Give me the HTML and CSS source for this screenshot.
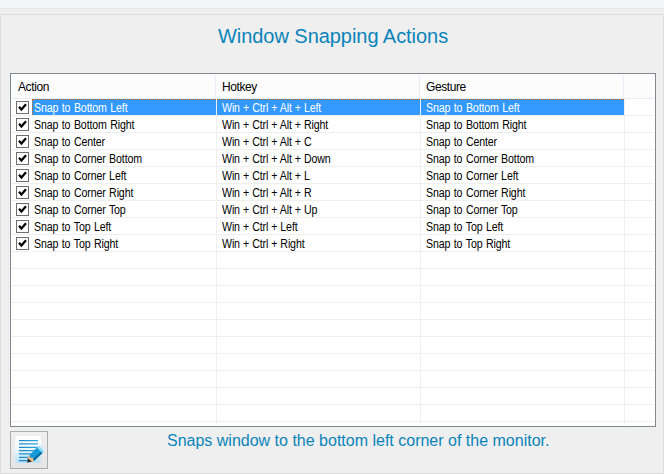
FILE: index.html
```html
<!DOCTYPE html>
<html lang="en">
<head>
<meta charset="utf-8">
<title>Window Snapping Actions</title>
<link rel="stylesheet" href="styles.css">
</head>
<body>
<div class="strip"></div>
<main class="group">
<h1 class="title">Window Snapping Actions</h1>
<section class="list">
<div class="head"><span>Action</span><span>Hotkey</span><span>Gesture</span><span></span></div>
<div class="rows" id="rows"></div>
</section>
<footer class="footer">
<button class="edit" aria-label="Edit action">
<svg width="36" height="36" viewBox="0 0 36 36">
<defs>
<linearGradient id="paper" x1="0" y1="0" x2="0" y2="1"><stop offset="0" stop-color="#fff"/><stop offset=".4" stop-color="#f4fbff"/><stop offset="1" stop-color="#b3dffa"/></linearGradient>
<linearGradient id="ink" x1="0" y1="0" x2="1" y2="0"><stop offset="0" stop-color="#1f86c4"/><stop offset="1" stop-color="#32a9df"/></linearGradient>
</defs>
<rect x="4" y="4" width="26" height="27" rx="4" fill="url(#paper)"/>
<path d="M8 8h19v1.300H8zM8 11.200h19v1.300H8zM8 14.800h19v1.300H8zM8 18h19v1.300H8zM8 21.200h16v1.300H8zM8 24.800h12v1.300H8zM8 28h9v1.300H8z" fill="url(#ink)"/>
<path d="M16 30.500l1.600-7 3.400-.5 3 4.500-1.500 2z" fill="#eebc82"/>
<path d="M16 30.500l1-4.200 3.800 3.400z" fill="#292b34"/>
<path d="M18.500 23l7.500-7.500 5.500 5.500-8.500 8-1-3-3-.5z" fill="#159bd7"/>
<path d="M22.300 26.500l8-7 1.200 1.500-8.500 8z" fill="#086ca7"/>
<path d="M26 15.500l2-1.500 5 5-1.500 2z" fill="#8ad8f5"/>
<path d="M28 14l1.500-.5 3.500 3.500v2z" fill="#c8effb"/>
</svg>
</button>
<p class="hint">Snaps window to the bottom left corner of the monitor.</p>
</footer>
</main>
<script src="script.js"></script>
</body>
</html>
```
FILE: styles.css
```css
* { box-sizing: border-box; }
body {
  margin: 0;
  height: 474px;
  overflow: hidden;
  background: #efefef;
  font-family: "Liberation Sans", Arial, sans-serif;
  display: flex;
  flex-direction: column;
}
.strip { height: 9px; margin-bottom: 5px; flex: none; background: #f4f5f8; border-bottom: 1px solid #e4e7ea; }
.group { height: 460px; border: 1px solid #dcdcdc; padding: 0 7px 0 9px; }
.title {
  margin: 0;
  height: 58px;
  padding: 9px 0 0 208px;
  font-size: 20px;
  line-height: 24px;
  font-weight: 400;
  letter-spacing: -0.05px;
  color: #0a84b9;
  white-space: nowrap;
}
.list { height: 354px; border: 1px solid #828790; background: #fff; padding: 1px; }
.head, .row { display: grid; }
.head {
  grid-template-columns: 204px 204px 204px 1fr;
  height: 24px;
  background: #fcfcfc;
  border-bottom: 1px solid #e5eef7;
  font-size: 12px;
  line-height: 24px;
  letter-spacing: -0.4px;
}
.head span { padding-left: 6px; border-right: 1px solid #e5eef7; }
.head span:last-child { border: 0; }
.rows { height: 326px; overflow: hidden; }
.row {
  grid-template-columns: 205px 204px 204px 1fr;
  height: 17px;
  font-size: 12px;
  line-height: 18px;
  letter-spacing: -0.15px;
  word-spacing: 0.8px;
  white-space: nowrap;
}
.text { display: inline-block; transform: scaleX(0.885); transform-origin: 0 50%; }
.cell { border-right: 1px solid #efefef; border-bottom: 1px solid #efefef; padding-left: 5px; height: 17px; background-clip: padding-box; }
.cell:last-child { border-right: 0; }
.hotkey { word-spacing: 0.3px; }
.name { display: flex; padding-left: 4px; }
.check { flex: none; width: 13px; height: 13px; margin: 2px 3px 0 0; border: 1px solid #6e6e6e; background: #fff; }
.check svg { display: block; }
.label { flex: 1; height: 16px; padding-left: 2px; }
.selected .label, .selected .hotkey, .selected .gesture {
  color: #fff;
  background-color: #3399ff;
  background-image: repeating-linear-gradient(90deg, #cc6600 0 1px, transparent 1px 2px);
  background-size: 100% 1px;
  background-repeat: no-repeat;
}
.selected .label { border-left: 1px dotted #cc6600; padding-left: 1px; }
.footer { display: flex; padding-top: 4px; }
.edit { width: 38px; height: 38px; padding: 0; border: 1px solid #acacac; background: linear-gradient(#f0f0f0, #e5e5e5); }
.edit svg { display: block; }
.hint { margin: 1px 0 0 119px; font-size: 16px; line-height: 18px; color: #0a84b9; white-space: nowrap; }
```
FILE: script.js
```js
const actions = [
  ["Snap to Bottom Left", "Win + Ctrl + Alt + Left"],
  ["Snap to Bottom Right", "Win + Ctrl + Alt + Right"],
  ["Snap to Center", "Win + Ctrl + Alt + C"],
  ["Snap to Corner Bottom", "Win + Ctrl + Alt + Down"],
  ["Snap to Corner Left", "Win + Ctrl + Alt + L"],
  ["Snap to Corner Right", "Win + Ctrl + Alt + R"],
  ["Snap to Corner Top", "Win + Ctrl + Alt + Up"],
  ["Snap to Top Left", "Win + Ctrl + Left"],
  ["Snap to Top Right", "Win + Ctrl + Right"]
];
const check = '<span class="check"><svg width="11" height="11" viewBox="0 0 11 11"><path d="M2 4.800L4.400 7.500L9 2.200" fill="none" stroke="#000" stroke-width="2.200"/></svg></span>';
const text = (s) => `<span class="text">${s}</span>`;
let html = "";
for (let i = 0; i < 20; i++) {
  const a = actions[i];
  html += `<div class="row${i === 0 ? " selected" : ""}">` +
    `<div class="cell name">${a ? check + `<span class="label">${text(a[0])}</span>` : ""}</div>` +
    `<div class="cell hotkey">${a ? text(a[1]) : ""}</div>` +
    `<div class="cell gesture">${a ? text(a[0]) : ""}</div>` +
    `<div class="cell"></div></div>`;
}
document.getElementById("rows").innerHTML = html;
```
